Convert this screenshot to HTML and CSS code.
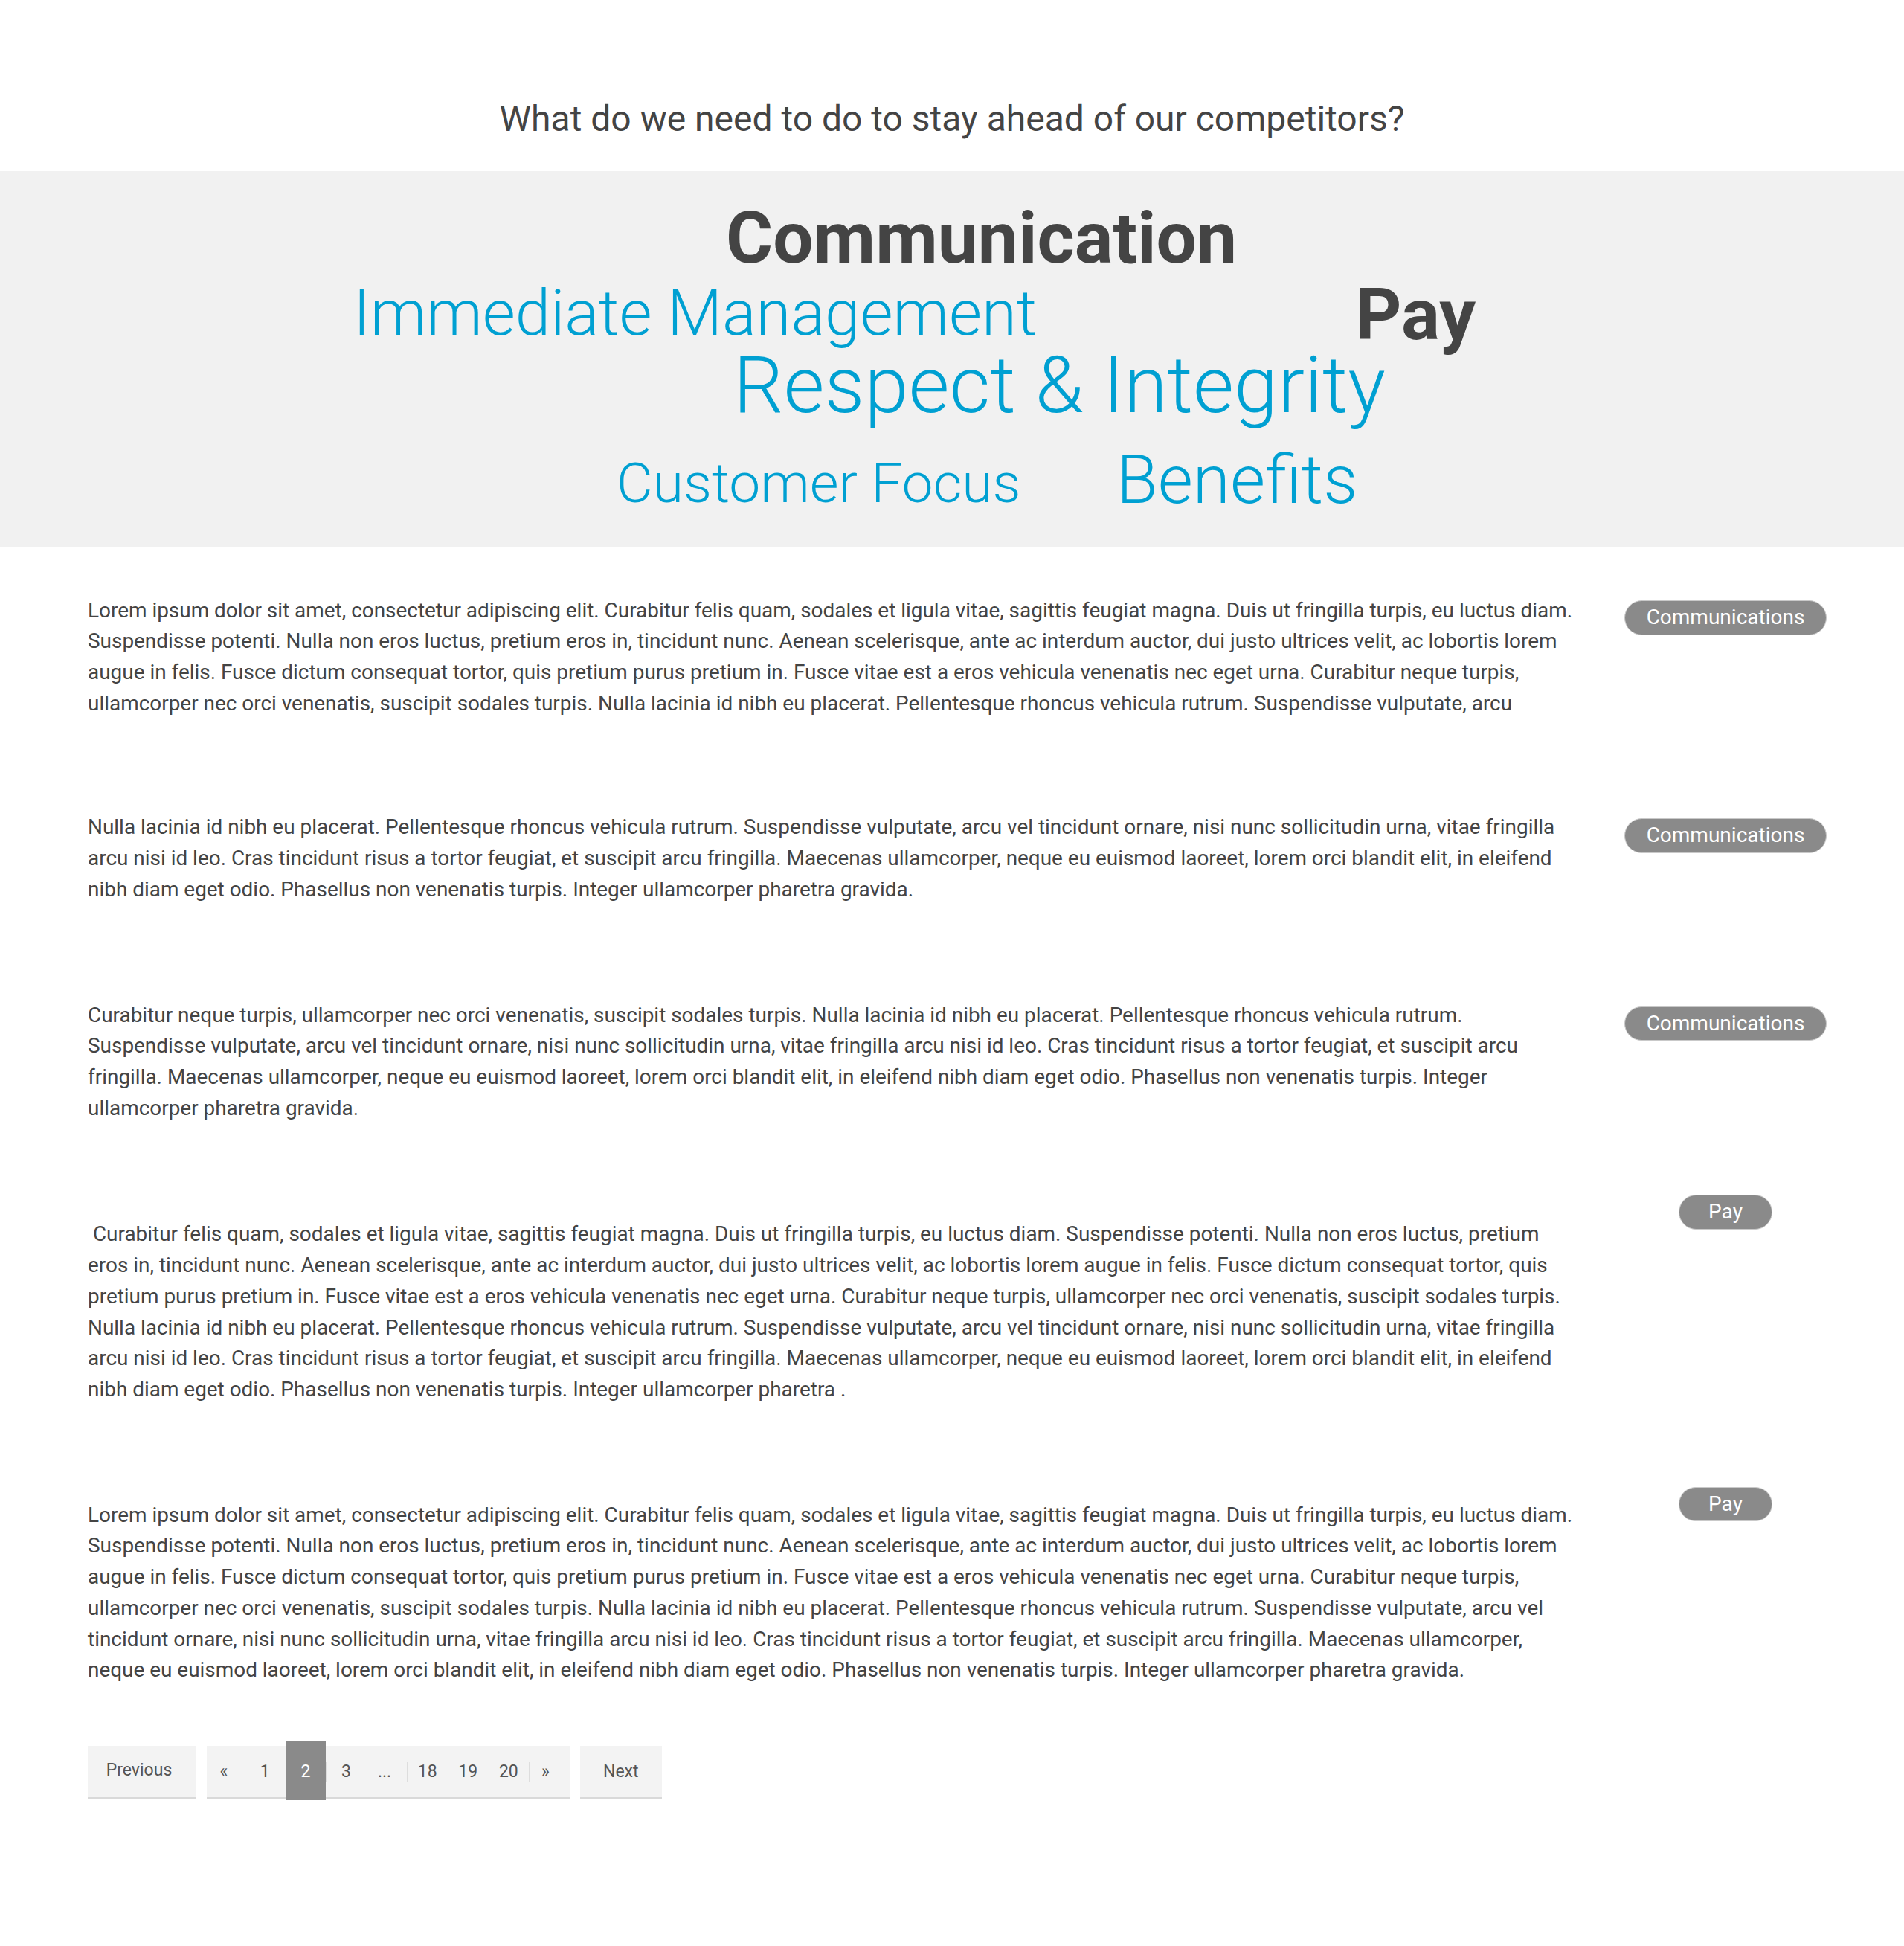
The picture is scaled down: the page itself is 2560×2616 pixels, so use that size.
FILE: index.html
```
<!DOCTYPE html>
<html lang="en">
<head>
<meta charset="utf-8">
<title>Word cloud</title>
<link rel="stylesheet" href="styles.css">
</head>
<body>
<header class="question">
  <h1 class="question-title">What do we need to do to stay ahead of our competitors?</h1>
</header>
<section class="cloud">
  <span class="word word-communication">Communication</span>
  <span class="word word-immediate">Immediate Management</span>
  <span class="word word-pay">Pay</span>
  <span class="word word-respect">Respect &amp; Integrity</span>
  <span class="word word-customer">Customer Focus</span>
  <span class="word word-benefits">Benefits</span>
</section>
<main class="responses">
  <article class="response response-1">
    <p class="response-text">Lorem ipsum dolor sit amet, consectetur adipiscing elit. Curabitur felis quam, sodales et ligula vitae, sagittis feugiat magna. Duis ut fringilla turpis, eu luctus diam. Suspendisse potenti. Nulla non eros luctus, pretium eros in, tincidunt nunc. Aenean scelerisque, ante ac interdum auctor, dui justo ultrices velit, ac lobortis lorem augue in felis. Fusce dictum consequat tortor, quis pretium purus pretium in. Fusce vitae est a eros vehicula venenatis nec eget urna. Curabitur neque turpis, ullamcorper nec orci venenatis, suscipit sodales turpis. Nulla lacinia id nibh eu placerat. Pellentesque rhoncus vehicula rutrum. Suspendisse vulputate, arcu</p>
    <div class="response-tag"><span class="tag">Communications</span></div>
  </article>
  <article class="response response-2">
    <p class="response-text">Nulla lacinia id nibh eu placerat. Pellentesque rhoncus vehicula rutrum. Suspendisse vulputate, arcu vel tincidunt ornare, nisi nunc sollicitudin urna, vitae fringilla arcu nisi id leo. Cras tincidunt risus a tortor feugiat, et suscipit arcu fringilla. Maecenas ullamcorper, neque eu euismod laoreet, lorem orci blandit elit, in eleifend nibh diam eget odio. Phasellus non venenatis turpis. Integer ullamcorper pharetra gravida.</p>
    <div class="response-tag"><span class="tag">Communications</span></div>
  </article>
  <article class="response response-3">
    <p class="response-text">Curabitur neque turpis, ullamcorper nec orci venenatis, suscipit sodales turpis. Nulla lacinia id nibh eu placerat. Pellentesque rhoncus vehicula rutrum. Suspendisse vulputate, arcu vel tincidunt ornare, nisi nunc sollicitudin urna, vitae fringilla arcu nisi id leo. Cras tincidunt risus a tortor feugiat, et suscipit arcu fringilla. Maecenas ullamcorper, neque eu euismod laoreet, lorem orci blandit elit, in eleifend nibh diam eget odio. Phasellus non venenatis turpis. Integer ullamcorper pharetra gravida.</p>
    <div class="response-tag"><span class="tag">Communications</span></div>
  </article>
  <article class="response response-4">
    <p class="response-text">&nbsp;Curabitur felis quam, sodales et ligula vitae, sagittis feugiat magna. Duis ut fringilla turpis, eu luctus diam. Suspendisse potenti. Nulla non eros luctus, pretium eros in, tincidunt nunc. Aenean scelerisque, ante ac interdum auctor, dui justo ultrices velit, ac lobortis lorem augue in felis. Fusce dictum consequat tortor, quis pretium purus pretium in. Fusce vitae est a eros vehicula venenatis nec eget urna. Curabitur neque turpis, ullamcorper nec orci venenatis, suscipit sodales turpis. Nulla lacinia id nibh eu placerat. Pellentesque rhoncus vehicula rutrum. Suspendisse vulputate, arcu vel tincidunt ornare, nisi nunc sollicitudin urna, vitae fringilla arcu nisi id leo. Cras tincidunt risus a tortor feugiat, et suscipit arcu fringilla. Maecenas ullamcorper, neque eu euismod laoreet, lorem orci blandit elit, in eleifend nibh diam eget odio. Phasellus non venenatis turpis. Integer ullamcorper pharetra .</p>
    <div class="response-tag"><span class="tag">Pay</span></div>
  </article>
  <article class="response response-5">
    <p class="response-text">Lorem ipsum dolor sit amet, consectetur adipiscing elit. Curabitur felis quam, sodales et ligula vitae, sagittis feugiat magna. Duis ut fringilla turpis, eu luctus diam. Suspendisse potenti. Nulla non eros luctus, pretium eros in, tincidunt nunc. Aenean scelerisque, ante ac interdum auctor, dui justo ultrices velit, ac lobortis lorem augue in felis. Fusce dictum consequat tortor, quis pretium purus pretium in. Fusce vitae est a eros vehicula venenatis nec eget urna. Curabitur neque turpis, ullamcorper nec orci venenatis, suscipit sodales turpis. Nulla lacinia id nibh eu placerat. Pellentesque rhoncus vehicula rutrum. Suspendisse vulputate, arcu vel tincidunt ornare, nisi nunc sollicitudin urna, vitae fringilla arcu nisi id leo. Cras tincidunt risus a tortor feugiat, et suscipit arcu fringilla. Maecenas ullamcorper, neque eu euismod laoreet, lorem orci blandit elit, in eleifend nibh diam eget odio. Phasellus non venenatis turpis. Integer ullamcorper pharetra gravida.</p>
    <div class="response-tag"><span class="tag">Pay</span></div>
  </article>
  <nav class="pager">
    <a class="pager-btn pager-prev">Previous</a>
    <div class="pager-pages">
      <a class="page page-first">&laquo;</a>
      <a class="page">1</a>
      <a class="page page-active">2</a>
      <a class="page">3</a>
      <a class="page page-dots">...</a>
      <a class="page">18</a>
      <a class="page">19</a>
      <a class="page">20</a>
      <a class="page page-last">&raquo;</a>
    </div>
    <a class="pager-btn pager-next">Next</a>
  </nav>
</main>
</body>
</html>
```
FILE: styles.css
```
html, body {
  margin: 0;
  padding: 0;
  background: #ffffff;
}

body {
  font-family: Roboto, "Liberation Sans", sans-serif;
  color: #444444;
  min-height: 2616px;
}

.question {
  box-sizing: border-box;
  height: 230px;
  padding-top: 136px;
  text-align: center;
}

.question-title {
  margin: 0;
  font-size: 48px;
  line-height: 48px;
  font-weight: 400;
  color: #444444;
}

.cloud {
  position: relative;
  height: 506px;
  background: #f1f1f1;
}

.word {
  position: absolute;
  line-height: 1;
  white-space: nowrap;
  color: #00a0d2;
  font-weight: 300;
}

.word-communication {
  left: 976px;
  top: 42px;
  font-size: 96.5px;
  font-weight: 700;
  color: #444444;
}

.word-immediate {
  left: 475px;
  top: 149px;
  font-size: 85.2px;
}

.word-pay {
  left: 1822px;
  top: 145px;
  font-size: 97px;
  font-weight: 700;
  color: #444444;
}

.word-respect {
  left: 986px;
  top: 235px;
  font-size: 106.4px;
}

.word-customer {
  left: 829px;
  top: 382px;
  font-size: 75px;
}

.word-benefits {
  left: 1501px;
  top: 370px;
  font-size: 91px;
}

.responses {
  padding: 0 48px 0 118px;
}

.response {
  display: flex;
  align-items: flex-start;
}

.response-text {
  width: 2010px;
  flex: none;
  margin: 0;
  font-size: 27.93px;
  line-height: 41.72px;
  color: #444444;
}

.response-tag {
  flex: 1;
  display: flex;
  justify-content: center;
  padding-top: 9px;
}

.response-1 { margin-top: 63.5px; }
.response-1 .response-tag { padding-top: 7.5px; }
.response-2 { margin-top: 125px; }
.response-3 { margin-top: 127px; }
.response-4 { margin-top: 96px; }
.response-5 { margin-top: 110px; }

.response-4 .response-text { margin-top: 32px; }
.response-5 .response-text { margin-top: 17px; }
.response-4 .response-tag,
.response-5 .response-tag { padding-top: 0; }

.tag {
  display: inline-block;
  min-width: 126px;
  box-sizing: border-box;
  padding: 5px 29px;
  border: 1px solid #c9c9c9;
  border-radius: 24px;
  background: #8a8a8a;
  color: #ffffff;
  font-size: 28px;
  line-height: 34.7px;
  text-align: center;
  white-space: nowrap;
}

.pager {
  display: flex;
  align-items: stretch;
  gap: 14px;
  margin-top: 81px;
}

.pager-btn,
.pager-pages {
  box-sizing: border-box;
  height: 72px;
  background: #f3f3f3;
  border-bottom: 3.5px solid #d9d9d9;
}

.pager-btn {
  display: flex;
  align-items: center;
  justify-content: center;
  font-size: 23px;
  color: #555555;
}

.pager-prev {
  width: 146px;
  padding-bottom: 5px;
  padding-right: 8px;
}

.pager-next {
  width: 110px;
}

.pager-pages {
  display: flex;
  align-items: stretch;
}

.page {
  position: relative;
  box-sizing: border-box;
  width: 54.6px;
  display: flex;
  align-items: center;
  justify-content: center;
  font-size: 23px;
  color: #555555;
}

.page::before {
  content: "";
  position: absolute;
  left: 0;
  top: 50%;
  width: 1px;
  height: 27px;
  margin-top: -13px;
  background: #dddddd;
}

.page-first {
  width: 51px;
  padding-right: 5px;
}

.page-first::before {
  display: none;
}

.page-dots {
  padding-right: 6px;
}

.page-last {
  padding-right: 10px;
}

.page-active {
  margin-top: -6px;
  margin-bottom: -3.5px;
  padding-top: 6px;
  padding-bottom: 3.5px;
  background: #8a8a8a;
  color: #ffffff;
}
```
